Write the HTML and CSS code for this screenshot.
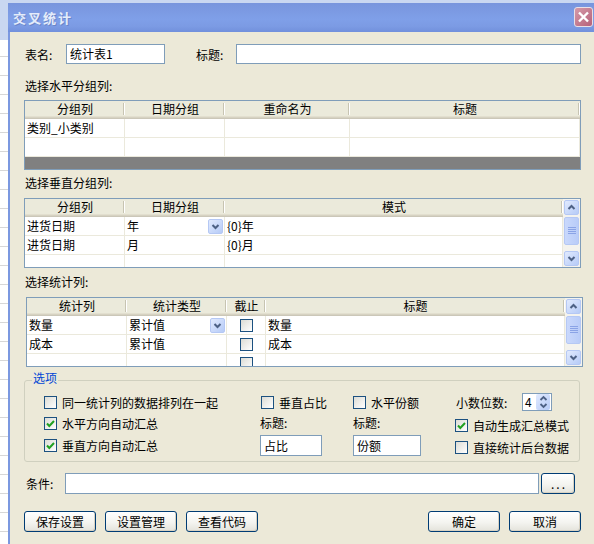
FILE: index.html
```html
<!DOCTYPE html>
<html lang="zh-CN">
<head>
  <meta charset="UTF-8" />
  <title>交叉统计</title>
  <link rel="stylesheet" href="styles.css">
</head>
<body>
  <div class="dialog">
    <div class="titlebar">
      <span class="title">交叉统计</span>
      <span class="close">
        <svg width="17" height="18" viewBox="0 0 17 18"><path d="M4 4.5 L13 13.5 M13 4.5 L4 13.5" stroke="#fff" stroke-width="2.4" fill="none"/></svg>
      </span>
    </div>

    <div class="body">
      <div class="name-row">
        <span class="lbl lbl-name">表名:</span>
        <div class="input inp-name">统计表1</div>
        <span class="lbl lbl-title">标题:</span>
        <div class="input inp-title"></div>
      </div>

      <div class="section s1">选择水平分组列:</div>
      <div class="grid">
        <div class="grid-main">
          <div class="ghead cols1"><span>分组列</span><span>日期分组</span><span>重命名为</span><span>标题</span></div>
          <div class="grow cols1"><span>类别_小类别</span><span></span><span></span><span></span></div>
          <div class="grow cols1"><span></span><span></span><span></span><span></span></div>
          <div class="gfill"></div>
        </div>
      </div>

      <div class="section s2">选择垂直分组列:</div>
      <div class="grid g2">
        <div class="grid-main">
          <div class="ghead cols2"><span>分组列</span><span>日期分组</span><span>模式</span></div>
          <div class="grow cols2">
            <span>进货日期</span>
            <span class="combo">年<i class="drop"><svg width="13" height="13" viewBox="0 0 13 13"><path d="M3.5 5 L6.5 8 L9.5 5" stroke="#4d6185" stroke-width="2" fill="none"/></svg></i></span>
            <span>{0}年</span>
          </div>
          <div class="grow cols2"><span>进货日期</span><span>月</span><span>{0}月</span></div>
          <div class="grow cols2"><span></span><span></span><span></span></div>
        </div>
        <div class="vscroll">
          <span class="sb-btn"><svg width="13" height="13" viewBox="0 0 13 13"><path d="M3.5 8 L6.5 5 L9.5 8" stroke="#4d6185" stroke-width="2" fill="none"/></svg></span>
          <span class="sb-thumb"><svg width="8" height="8" viewBox="0 0 8 8"><path d="M0 0.5 H8 M0 2.5 H8 M0 4.5 H8 M0 6.5 H8" stroke="#8aa3e6" stroke-width="1"/></svg></span>
          <span class="sb-btn sb-down"><svg width="13" height="13" viewBox="0 0 13 13"><path d="M3.5 5 L6.5 8 L9.5 5" stroke="#4d6185" stroke-width="2" fill="none"/></svg></span>
        </div>
      </div>

      <div class="section s3">选择统计列:</div>
      <div class="grid g3">
        <div class="grid-main">
          <div class="ghead cols3"><span>统计列</span><span>统计类型</span><span>截止</span><span>标题</span></div>
          <div class="grow cols3">
            <span>数量</span>
            <span class="combo">累计值<i class="drop"><svg width="13" height="13" viewBox="0 0 13 13"><path d="M3.5 5 L6.5 8 L9.5 5" stroke="#4d6185" stroke-width="2" fill="none"/></svg></i></span>
            <span class="cell-cb"><i class="cb"></i></span>
            <span>数量</span>
          </div>
          <div class="grow cols3"><span>成本</span><span>累计值</span><span class="cell-cb"><i class="cb"></i></span><span>成本</span></div>
          <div class="grow cols3"><span></span><span></span><span class="cell-cb"><i class="cb"></i></span><span></span></div>
        </div>
        <div class="vscroll">
          <span class="sb-btn"><svg width="13" height="13" viewBox="0 0 13 13"><path d="M3.5 8 L6.5 5 L9.5 8" stroke="#4d6185" stroke-width="2" fill="none"/></svg></span>
          <span class="sb-thumb"><svg width="8" height="8" viewBox="0 0 8 8"><path d="M0 0.5 H8 M0 2.5 H8 M0 4.5 H8 M0 6.5 H8" stroke="#8aa3e6" stroke-width="1"/></svg></span>
          <span class="sb-btn sb-down"><svg width="13" height="13" viewBox="0 0 13 13"><path d="M3.5 5 L6.5 8 L9.5 5" stroke="#4d6185" stroke-width="2" fill="none"/></svg></span>
        </div>
      </div>

      <div class="group">
        <span class="group-title">选项</span>

        <label class="check"><i class="cb"></i>同一统计列的数据排列在一起</label>
        <label class="check col-b"><i class="cb"></i>垂直占比</label>
        <label class="check"><i class="cb"></i>水平份额</label>
        <div class="decimals">
          <span>小数位数:</span>
          <div class="spin">
            <span class="spin-val">4</span>
            <span class="spin-btns">
              <svg width="13" height="16" viewBox="0 0 13 16"><path d="M3.5 6 L6.5 3 L9.5 6 M3.5 10 L6.5 13 L9.5 10" stroke="#4d6185" stroke-width="1.8" fill="none"/></svg>
            </span>
          </div>
        </div>

        <label class="check"><i class="cb on"><svg width="11" height="11" viewBox="0 0 11 11"><path d="M2 5.5 L4.3 8 L9 3" stroke="#21a121" stroke-width="2" fill="none"/></svg></i>水平方向自动汇总</label>
        <span class="glabel">标题:</span>
        <span class="glabel">标题:</span>
        <label class="check col-d"><i class="cb on"><svg width="11" height="11" viewBox="0 0 11 11"><path d="M2 5.5 L4.3 8 L9 3" stroke="#21a121" stroke-width="2" fill="none"/></svg></i>自动生成汇总模式</label>

        <label class="check"><i class="cb on"><svg width="11" height="11" viewBox="0 0 11 11"><path d="M2 5.5 L4.3 8 L9 3" stroke="#21a121" stroke-width="2" fill="none"/></svg></i>垂直方向自动汇总</label>
        <div class="input inp-pct">占比</div>
        <div class="input inp-share">份额</div>
        <label class="check col-d"><i class="cb"></i>直接统计后台数据</label>
      </div>

      <div class="cond-row">
        <span class="lbl lbl-cond">条件:</span>
        <div class="input inp-cond"></div>
        <button class="btn btn-more">...</button>
      </div>

      <div class="btn-row">
        <div class="btn-group">
          <button class="btn">保存设置</button>
          <button class="btn">设置管理</button>
          <button class="btn">查看代码</button>
        </div>
        <div class="btn-group">
          <button class="btn">确定</button>
          <button class="btn">取消</button>
        </div>
      </div>
    </div>
  </div>
</body>
</html>
```

FILE: styles.css
```css
html, body {
  margin: 0;
  height: 100%;
  overflow: hidden;
}
body {
  box-sizing: border-box;
  padding: 3px 0 0 8px;
  font-family: "Noto Sans CJK SC", "Liberation Sans", sans-serif;
  font-size: 12px;
  color: #000;
  background:
    linear-gradient(#c9d7f1, #c9d7f1) 0 0 / 100% 40px no-repeat,
    repeating-linear-gradient(#fff 0 18px, #d7d7d7 18px 19px);
}

/* window frame */
.dialog {
  width: 588px;
  height: 560px;
  background: #7b98e0;
}
.titlebar {
  height: 29px;
  box-sizing: border-box;
  display: flex;
  align-items: center;
  justify-content: space-between;
  padding: 0 3px 1px 5px;
  background: linear-gradient(#7895dd, #7f9fe8 55%, #7c9be4 80%, #7190dc);
}
.title {
  color: #e4ecfb;
  font-weight: bold;
  font-size: 13px;
  letter-spacing: 2px;
  text-shadow: 1px 1px 0 #6a85c8;
}
.close {
  width: 19px;
  height: 20px;
  box-sizing: border-box;
  display: flex;
  align-items: center;
  justify-content: center;
  border: 1px solid #eadfe6;
  border-radius: 3px;
  background: linear-gradient(135deg, #d59aa8, #b7617a);
}
.body {
  margin-left: 2px;
  height: calc(100% - 29px);
  box-sizing: border-box;
  padding: 12px 0 0 14px;
  background: #ece9d8;
}

/* inputs */
.input {
  box-sizing: border-box;
  height: 20px;
  line-height: 18px;
  padding-left: 3px;
  background: #fff;
  border: 1px solid #7f9db9;
  white-space: nowrap;
}
.name-row {
  display: flex;
  align-items: center;
  height: 20px;
}
.lbl-name {
  width: 42px;
  padding-left: 1px;
  box-sizing: border-box;
}
.inp-name { width: 99px; }
.lbl-title {
  width: 40px;
  margin-left: 31px;
}
.inp-title { width: 345px; }

.section {
  height: 16px;
  line-height: 16px;
  padding-left: 1px;
}
.s1 { margin-top: 14px; }
.s2 { margin-top: 5px; }
.s3 { margin-top: 6px; }

/* data grids */
.grid {
  margin-top: 6px;
  width: 557px;
  height: 70px;
  box-sizing: border-box;
  border: 1px solid #7f9db9;
  background: #fff;
  display: flex;
  overflow: hidden;
}
.g2 { margin-top: 7px; }
.g3 { margin-top: 7px; margin-left: 2px; }
.grid-main {
  flex: 1;
  display: flex;
  flex-direction: column;
  min-width: 0;
}
.cols1 { grid-template-columns: 100px 100px 125px 1fr; }
.cols2 { grid-template-columns: 100px 100px 1fr; }
.cols3 { grid-template-columns: 100px 100px 39px 1fr; }
.ghead {
  display: grid;
  flex: none;
  height: 18px;
  background: linear-gradient(#ebeadb 0 15px, #e2dfcf 15px 16px, #d6d2c2 16px 17px, #cbc7b8 17px 18px);
}
.ghead span {
  text-align: center;
  line-height: 15px;
  background:
    linear-gradient(#c7c4b2, #c7c4b2) right 1px top 2px / 1px 12px no-repeat,
    linear-gradient(#fff, #fff) right 0 top 2px / 1px 12px no-repeat;
}
.grow {
  display: grid;
  flex: none;
  height: 18px;
  border-bottom: 1px solid #ebe9dc;
}
.grow span {
  border-right: 1px solid #ebe9dc;
  padding-left: 2px;
  line-height: 18px;
  white-space: nowrap;
  overflow: hidden;
}
.gfill {
  flex: 1;
  background: #808080;
}
.combo {
  display: flex;
  align-items: center;
  justify-content: space-between;
}
.drop {
  width: 15px;
  height: 15px;
  margin-right: 1px;
  box-sizing: border-box;
  display: flex;
  align-items: center;
  justify-content: center;
  border: 1px solid #b5c8f4;
  border-radius: 2px;
  background: linear-gradient(135deg, #e1eafe, #b6cbf7);
}
.grow .cell-cb {
  display: flex;
  align-items: center;
  justify-content: center;
  padding-left: 0;
}

/* scrollbar */
.vscroll {
  flex: none;
  width: 17px;
  box-sizing: border-box;
  padding: 1px 0;
  display: flex;
  flex-direction: column;
  align-items: center;
  background: #f4f3ee;
}
.sb-btn, .sb-thumb {
  width: 15px;
  box-sizing: border-box;
  display: flex;
  align-items: center;
  justify-content: center;
  border: 1px solid #b5c8f4;
  border-radius: 2px;
  background: linear-gradient(135deg, #e1eafe, #b6cbf7);
}
.sb-btn { height: 15px; }
.sb-thumb {
  height: 28px;
  margin-top: 2px;
  background: linear-gradient(90deg, #c9d8fc, #b9ccf8);
}
.sb-down { margin-top: auto; }

/* checkbox */
.cb {
  flex: none;
  width: 13px;
  height: 13px;
  box-sizing: border-box;
  display: flex;
  align-items: center;
  justify-content: center;
  border: 1px solid #1c5180;
  background: linear-gradient(135deg, #dcdcd5, #fff);
}

/* options group */
.group {
  position: relative;
  margin-top: 13px;
  width: 556px;
  height: 82px;
  box-sizing: border-box;
  border: 1px solid #d0d0bf;
  border-radius: 3px;
  padding: 11px 0 0 19px;
  display: grid;
  grid-template-columns: 216px 93px 102px 1fr;
  grid-template-rows: 20px 22px 22px;
}
.group-title {
  position: absolute;
  left: 7px;
  top: -10px;
  padding: 0 1px;
  line-height: 14px;
  background: #ece9d8;
  color: #0046d5;
}
.check {
  display: flex;
  align-items: center;
  gap: 5px;
  white-space: nowrap;
}
.col-b { padding-left: 1px; }
.col-d {
  align-self: end;
  height: 16px;
  margin-bottom: 1px;
}
.glabel {
  line-height: 22px;
  white-space: nowrap;
}
.decimals {
  display: flex;
  align-items: center;
  padding-left: 1px;
}
.decimals > span { width: 66px; }
.spin {
  width: 30px;
  height: 18px;
  box-sizing: border-box;
  display: flex;
  border: 1px solid #7f9db9;
  background: #fff;
}
.spin-val {
  flex: 1;
  padding-left: 2px;
  line-height: 16px;
}
.spin-btns {
  width: 14px;
  margin: 0 1px 0 0;
  display: flex;
  align-items: center;
  justify-content: center;
  border-radius: 2px;
  background: linear-gradient(135deg, #e1eafe, #b6cbf7);
}
.inp-pct {
  align-self: end;
  width: 62px;
  height: 21px;
  line-height: 19px;
}
.inp-share {
  align-self: end;
  width: 68px;
  height: 21px;
  line-height: 19px;
}

/* condition */
.cond-row {
  margin-top: 11px;
  display: flex;
  align-items: center;
  width: 551px;
}
.lbl-cond {
  width: 41px;
  padding-left: 2px;
  box-sizing: border-box;
}
.inp-cond {
  width: 474px;
  height: 21px;
}

/* buttons */
.btn {
  width: 72px;
  height: 21px;
  padding: 0;
  font-family: inherit;
  font-size: 12px;
  line-height: 19px;
  color: #000;
  border: 1px solid #003c74;
  border-radius: 3px;
  background: linear-gradient(#ffffff, #f4f4f0 55%, #e4e3db);
  box-shadow: inset -1px -1px 0 #d8d2c2;
}
.btn-more {
  width: 34px;
  margin-left: 2px;
  letter-spacing: 2px;
  text-indent: 2px;
}
.btn-row {
  margin-top: 17px;
  width: 557px;
  display: flex;
  justify-content: space-between;
}
.btn-group {
  display: flex;
  gap: 9px;
}
```
